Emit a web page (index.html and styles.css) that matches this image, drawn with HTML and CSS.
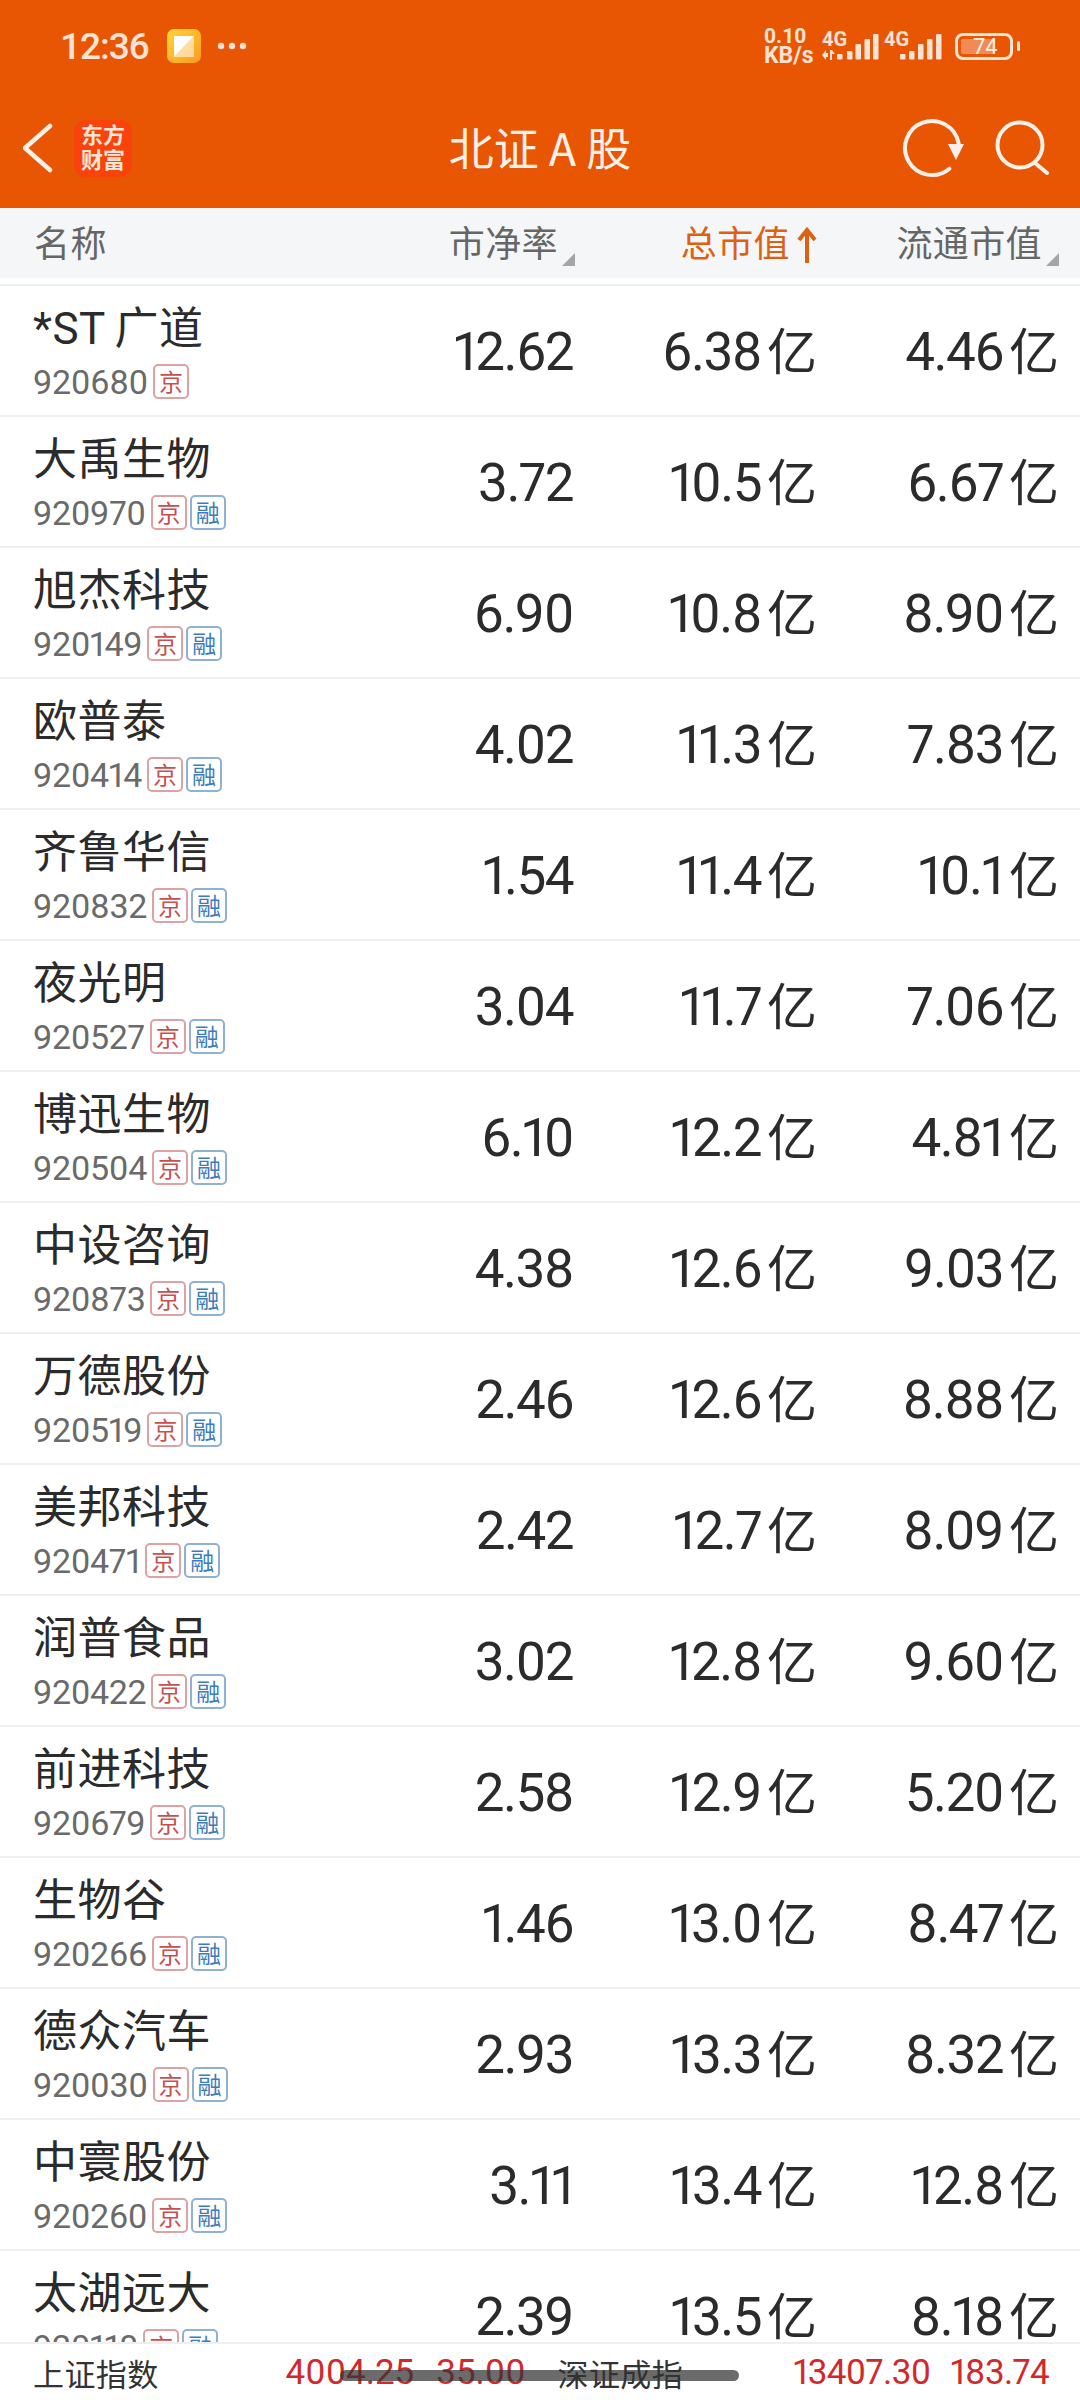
FILE: index.html
```html
<!DOCTYPE html>
<html lang="zh-CN">
<head>
    <meta charset="UTF-8" />
    <title>北证A股</title>
    <link rel="stylesheet" href="styles.css">
</head>
<body>
    <div class="page">
        <div class="top">
            <div class="status">
                <span class="time">12:36</span>
                <svg class="app-icon" width="34" height="34" viewBox="0 0 34 34">
                    <defs>
                        <linearGradient id="appFill" x1="0" y1="0" x2="1" y2="1">
                            <stop offset="0" stop-color="#fdd63a"/>
                            <stop offset="1" stop-color="#fd9a1e"/>
                        </linearGradient>
                    </defs>
                    <rect width="34" height="34" rx="7" fill="url(#appFill)"/>
                    <polygon points="7,7 27,7 7,28" fill="#fff"/>
                    <polygon points="27,7 27,28 7,28" fill="#fff" opacity=".55"/>
                </svg>
                <svg class="dots" width="30" height="8" viewBox="0 0 30 8" fill="#fbe3d4">
                    <circle cx="4" cy="4" r="3.2"/><circle cx="15" cy="4" r="3.2"/><circle cx="26" cy="4" r="3.2"/>
                </svg>
                <div class="status-right">
                    <div class="speed"><span>0.10</span><span class="speed-unit">KB/s</span></div>
                    <div class="net">
                        <span class="net-label">4G</span>
                        <svg width="57" height="28" viewBox="0 0 57 28" fill="#fbe3d4">
                            <polygon points="0,23 4,18 4,28"/><rect x="4" y="21" width="2" height="4"/>
                            <rect x="8" y="18" width="2" height="10"/><polygon points="10,18 13,22 10,22"/>
                            <rect x="15" y="22" width="5.5" height="5.5" rx="1"/>
                            <rect x="25" y="19" width="5.5" height="8.5" rx="1"/>
                            <rect x="33.5" y="12" width="5.5" height="15.5" rx="1"/>
                            <rect x="42.5" y="7" width="5.5" height="20.5" rx="1"/>
                            <rect x="51" y="2" width="5.5" height="25.5" rx="1"/>
                        </svg>
                    </div>
                    <div class="net">
                        <span class="net-label">4G</span>
                        <svg width="58" height="28" viewBox="0 0 58 28" fill="#fbe3d4">
                            <rect x="16" y="22" width="5.5" height="5.5" rx="1"/>
                            <rect x="25" y="19" width="5.5" height="8.5" rx="1"/>
                            <rect x="34" y="12" width="5.5" height="15.5" rx="1"/>
                            <rect x="43" y="7" width="5.5" height="20.5" rx="1"/>
                            <rect x="52" y="2" width="5.5" height="25.5" rx="1"/>
                        </svg>
                    </div>
                    <div class="battery"><span class="battery-fill"></span><span class="battery-num">74</span></div>
                    <span class="battery-tip"></span>
                </div>
            </div>
            <div class="nav">
                <div class="nav-left">
                    <svg width="30" height="50" viewBox="0 0 30 50" fill="none" stroke="#fdf0e8" stroke-width="4.5" stroke-linecap="round" stroke-linejoin="round">
                        <polyline points="27,3 2,25 27,47"/>
                    </svg>
                    <div class="logo">东方<br>财富</div>
                </div>
                <div class="title">北证 A 股</div>
                <div class="nav-right">
                    <svg width="66" height="62" viewBox="0 0 66 62" fill="none">
                        <path d="M59.6 26.3A27 27 0 1 0 50.4 51.7" stroke="#fdf0e8" stroke-width="4" stroke-linecap="round"/>
                        <polygon points="49,27 65,27 57,43" fill="#fdf0e8"/>
                    </svg>
                    <svg width="56" height="56" viewBox="0 0 56 56" fill="none" stroke="#fdf0e8" stroke-width="4" stroke-linecap="round">
                        <circle cx="26" cy="25" r="22.5"/>
                        <line x1="41" y1="43" x2="53" y2="53"/>
                    </svg>
                </div>
            </div>
        </div>

        <div class="head">
            <span class="head-name">名称</span>
            <span class="head-col sortable">市净率</span>
            <span class="head-col active">总市值<svg class="up" width="20" height="36" viewBox="0 0 20 36" fill="none" stroke="#dd6113" stroke-width="4"><path d="M10 36V3M2 13L10 3L18 13"/></svg></span>
            <span class="head-col sortable">流通市值</span>
        </div>

        <div class="list">
            <div class="row"><div class="stock"><div class="name">*ST 广道</div><div class="meta"><span class="code">920680</span><span class="tag jing">京</span></div></div><span class="val">12.62</span><span class="val">6.38<span class="unit">亿</span></span><span class="val">4.46<span class="unit">亿</span></span></div>
            <div class="row"><div class="stock"><div class="name">大禹生物</div><div class="meta"><span class="code">920970</span><span class="tag jing">京</span><span class="tag rong">融</span></div></div><span class="val">3.72</span><span class="val">10.5<span class="unit">亿</span></span><span class="val">6.67<span class="unit">亿</span></span></div>
            <div class="row"><div class="stock"><div class="name">旭杰科技</div><div class="meta"><span class="code">920149</span><span class="tag jing">京</span><span class="tag rong">融</span></div></div><span class="val">6.90</span><span class="val">10.8<span class="unit">亿</span></span><span class="val">8.90<span class="unit">亿</span></span></div>
            <div class="row"><div class="stock"><div class="name">欧普泰</div><div class="meta"><span class="code">920414</span><span class="tag jing">京</span><span class="tag rong">融</span></div></div><span class="val">4.02</span><span class="val">11.3<span class="unit">亿</span></span><span class="val">7.83<span class="unit">亿</span></span></div>
            <div class="row"><div class="stock"><div class="name">齐鲁华信</div><div class="meta"><span class="code">920832</span><span class="tag jing">京</span><span class="tag rong">融</span></div></div><span class="val">1.54</span><span class="val">11.4<span class="unit">亿</span></span><span class="val">10.1<span class="unit">亿</span></span></div>
            <div class="row"><div class="stock"><div class="name">夜光明</div><div class="meta"><span class="code">920527</span><span class="tag jing">京</span><span class="tag rong">融</span></div></div><span class="val">3.04</span><span class="val">11.7<span class="unit">亿</span></span><span class="val">7.06<span class="unit">亿</span></span></div>
            <div class="row"><div class="stock"><div class="name">博迅生物</div><div class="meta"><span class="code">920504</span><span class="tag jing">京</span><span class="tag rong">融</span></div></div><span class="val">6.10</span><span class="val">12.2<span class="unit">亿</span></span><span class="val">4.81<span class="unit">亿</span></span></div>
            <div class="row"><div class="stock"><div class="name">中设咨询</div><div class="meta"><span class="code">920873</span><span class="tag jing">京</span><span class="tag rong">融</span></div></div><span class="val">4.38</span><span class="val">12.6<span class="unit">亿</span></span><span class="val">9.03<span class="unit">亿</span></span></div>
            <div class="row"><div class="stock"><div class="name">万德股份</div><div class="meta"><span class="code">920519</span><span class="tag jing">京</span><span class="tag rong">融</span></div></div><span class="val">2.46</span><span class="val">12.6<span class="unit">亿</span></span><span class="val">8.88<span class="unit">亿</span></span></div>
            <div class="row"><div class="stock"><div class="name">美邦科技</div><div class="meta"><span class="code">920471</span><span class="tag jing">京</span><span class="tag rong">融</span></div></div><span class="val">2.42</span><span class="val">12.7<span class="unit">亿</span></span><span class="val">8.09<span class="unit">亿</span></span></div>
            <div class="row"><div class="stock"><div class="name">润普食品</div><div class="meta"><span class="code">920422</span><span class="tag jing">京</span><span class="tag rong">融</span></div></div><span class="val">3.02</span><span class="val">12.8<span class="unit">亿</span></span><span class="val">9.60<span class="unit">亿</span></span></div>
            <div class="row"><div class="stock"><div class="name">前进科技</div><div class="meta"><span class="code">920679</span><span class="tag jing">京</span><span class="tag rong">融</span></div></div><span class="val">2.58</span><span class="val">12.9<span class="unit">亿</span></span><span class="val">5.20<span class="unit">亿</span></span></div>
            <div class="row"><div class="stock"><div class="name">生物谷</div><div class="meta"><span class="code">920266</span><span class="tag jing">京</span><span class="tag rong">融</span></div></div><span class="val">1.46</span><span class="val">13.0<span class="unit">亿</span></span><span class="val">8.47<span class="unit">亿</span></span></div>
            <div class="row"><div class="stock"><div class="name">德众汽车</div><div class="meta"><span class="code">920030</span><span class="tag jing">京</span><span class="tag rong">融</span></div></div><span class="val">2.93</span><span class="val">13.3<span class="unit">亿</span></span><span class="val">8.32<span class="unit">亿</span></span></div>
            <div class="row"><div class="stock"><div class="name">中寰股份</div><div class="meta"><span class="code">920260</span><span class="tag jing">京</span><span class="tag rong">融</span></div></div><span class="val">3.11</span><span class="val">13.4<span class="unit">亿</span></span><span class="val">12.8<span class="unit">亿</span></span></div>
            <div class="row"><div class="stock"><div class="name">太湖远大</div><div class="meta"><span class="code">920118</span><span class="tag jing">京</span><span class="tag rong">融</span></div></div><span class="val">2.39</span><span class="val">13.5<span class="unit">亿</span></span><span class="val">8.18<span class="unit">亿</span></span></div>
        </div>

        <div class="ticker">
            <span class="index-name">上证指数</span>
            <span class="index-num first">4004.25</span>
            <span class="index-num change">35.00</span>
            <span class="index-name second">深证成指</span>
            <span class="index-num third">13407.30</span>
            <span class="index-num fourth">183.74</span>
            <span class="home-bar"></span>
        </div>
    </div>
</body>
</html>
```

FILE: styles.css
```css
/* page */
html, body {
    margin: 0;
    padding: 0;
}

body {
    font-family: Roboto, "Noto Sans CJK SC", sans-serif;
    background: #fff;
}

.page {
    width: 1080px;
    height: 2400px;
    display: flex;
    flex-direction: column;
    overflow: hidden;
}

/* orange top area */
.top {
    height: 208px;
    flex: none;
    background: #e85604;
    color: #fdf0e8;
}

.status {
    height: 92px;
    display: flex;
    align-items: center;
    padding: 0 60px;
    box-sizing: border-box;
}

.time {
    font-size: 37px;
    font-weight: 500;
    letter-spacing: -1px;
    color: #fbe3d4;
    width: 107px;
}

.dots {
    margin-left: 16px;
}

.status-right {
    margin-left: auto;
    display: flex;
    align-items: center;
}

.speed {
    display: flex;
    flex-direction: column;
    width: 58px;
    font-size: 21px;
    line-height: 19px;
    font-weight: 700;
    color: #fbe3d4;
}

.speed-unit {
    font-size: 23px;
}

.net {
    position: relative;
    width: 58px;
    height: 28px;
    margin-right: 4px;
    display: flex;
}

.net-label {
    position: absolute;
    left: 0;
    top: -3px;
    font-size: 20px;
    line-height: 20px;
    font-weight: 700;
    color: #fbe3d4;
}

.battery {
    margin-left: 9px;
    width: 58px;
    height: 27px;
    border: 3px solid #fbe3d4;
    border-radius: 8px;
    box-sizing: border-box;
    position: relative;
}

.battery-fill {
    position: absolute;
    left: 3px;
    top: 3px;
    bottom: 3px;
    width: 33px;
    border-radius: 2px;
    background: #f28a55;
}

.battery-num {
    position: absolute;
    left: 15px;
    top: 0;
    font-size: 22px;
    line-height: 21px;
    color: #fdf0e8;
}

.battery-tip {
    width: 3px;
    height: 10px;
    margin-left: 4px;
    border-radius: 2px;
    background: #fbe3d4;
}

.nav {
    height: 112px;
    display: grid;
    grid-template-columns: 1fr auto 1fr;
    align-items: center;
    padding: 0 30px;
}

.nav-left {
    display: flex;
    align-items: center;
    gap: 21px;
    margin-left: -7px;
}

.logo {
    width: 58px;
    height: 57px;
    border-radius: 12px;
    background: #f8430c;
    color: #fde4d4;
    font-size: 22px;
    line-height: 25px;
    font-weight: 700;
    text-align: center;
    padding-top: 3px;
    box-sizing: border-box;
}

.title {
    font-size: 45px;
    font-family: "Noto Sans CJK SC", sans-serif;
    line-height: 60px;
    margin-top: -2px;
}

.nav-right {
    display: flex;
    justify-content: flex-end;
    align-items: center;
    gap: 29px;
}

/* column headers */
.head {
    height: 70px;
    flex: none;
    display: grid;
    grid-template-columns: 1fr 242px 242px 242px;
    align-items: center;
    padding: 0 21px 5px 34px;
    box-sizing: border-box;
    background: #f5f6f8;
    color: #666;
    font-size: 36px;
    letter-spacing: 0.4px;
}

.head-col {
    position: relative;
    display: flex;
    justify-content: flex-end;
    align-items: center;
    padding-right: 17px;
    height: 50px;
}

.head-col.active {
    color: #dd6113;
    padding-right: 0;
}

.up {
    margin-left: 7px;
    margin-top: 8px;
}

.sortable::after {
    content: "";
    position: absolute;
    right: 0;
    bottom: 0;
    border-style: solid;
    border-width: 0 0 13px 13px;
    border-color: transparent transparent #a3a5a8 transparent;
}

/* stock rows */
.list {
    flex: 1;
    min-height: 0;
    overflow: hidden;
    margin-top: 6px;
    border-top: 2px solid #eeeff1;
}

.row {
    height: 131px;
    box-sizing: border-box;
    display: grid;
    grid-template-columns: 1fr 240px 244px 242px;
    align-items: center;
    padding: 0 21px 0 33px;
    border-bottom: 2px solid #eeeff1;
}

.stock {
    align-self: start;
    padding-top: 17px;
}

.name {
    font-size: 44px;
    letter-spacing: 0.5px;
    word-spacing: -2px;
    line-height: 52px;
    color: #2b2b2b;
    white-space: nowrap;
}

.meta {
    display: flex;
    align-items: center;
    margin-top: 9px;
    height: 35px;
}

.code {
    font-size: 34px;
    letter-spacing: -0.4px;
    color: #6a6a6a;
    font-variant-numeric: proportional-nums;
    margin-right: 5px;
}

.tag {
    width: 36px;
    height: 35px;
    box-sizing: border-box;
    border: 2px solid;
    border-radius: 5px;
    font-size: 24px;
    line-height: 30px;
    text-align: center;
    font-family: "Noto Sans CJK SC", sans-serif;
}

.jing {
    color: #c94f4f;
    border-color: #dea2a2;
}

.rong {
    color: #3d7cbc;
    border-color: #8fb1d3;
    margin-left: 3px;
}

.val {
    text-align: right;
    font-size: 53px;
    line-height: 62px;
    letter-spacing: -1.5px;
    color: #2b2b2b;
    font-variant-numeric: proportional-nums;
    white-space: nowrap;
    padding-top: 2px;
}

.unit {
    font-size: 50px;
    line-height: 0;
    letter-spacing: 0;
    margin-left: 6px;
}

/* index ticker at the bottom */
.ticker {
    height: 58px;
    flex: none;
    position: relative;
    display: flex;
    align-items: center;
    border-top: 2px solid #eeeff1;
    box-sizing: border-box;
    padding: 0 33px;
    background: #fff;
    white-space: nowrap;
}

.index-name {
    flex: none;
    font-size: 31px;
    letter-spacing: 0.4px;
    color: #333;
    font-family: "Noto Sans CJK SC", sans-serif;
}

.index-num {
    flex: none;
    font-size: 35px;
    color: #d1292b;
    font-variant-numeric: proportional-nums;
}

.first {
    margin-left: 127px;
}

.change {
    margin-left: 22px;
}

.second {
    margin-left: 32px;
}

.third {
    margin-left: 110px;
    letter-spacing: -0.6px;
}

.fourth {
    margin-left: 20px;
    letter-spacing: -0.6px;
}

.home-bar {
    position: absolute;
    left: 340px;
    top: 26px;
    width: 399px;
    height: 11px;
    border-radius: 6px;
    background: rgba(50, 50, 50, 0.72);
}
```
